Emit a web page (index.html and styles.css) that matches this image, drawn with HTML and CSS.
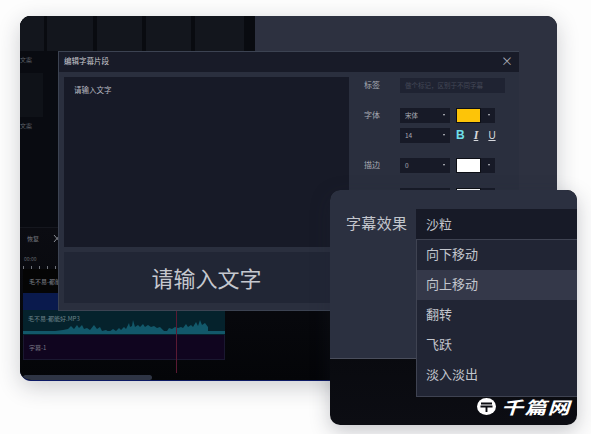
FILE: index.html
```html
<!DOCTYPE html>
<html lang="zh">
<head>
<meta charset="utf-8">
<title>字幕效果</title>
<link rel="stylesheet" href="styles.css">
</head>
<body>
<div class="desk">
  <section class="win">
    <div class="upper">
      <div class="library">
        <div class="thumbs">
          <i class="t1"></i><i class="t2"></i><i class="t3"></i><i class="t4"></i><i class="t5"></i>
        </div>
        <div class="cap">文案</div>
        <div class="card"></div>
        <div class="cap cap2">文案</div>
      </div>
      <div class="viewer"></div>
    </div>
    <div class="timeline">
      <div class="tools">
        <span class="undo">恢复</span>
        <svg class="scissors" width="8" height="9" viewBox="0 0 8 9"><path d="M1 1l6 7M1 8l6-7" stroke="#8b8e96" stroke-width="1" fill="none"/></svg>
      </div>
      <div class="ruler">00:00</div>
      <div class="ticks"></div>
      <div class="tracks">
        <div class="clip video">毛不易-都能好.MP3</div>
        <div class="clip blue"></div>
        <div class="clip audio">
          <svg class="wave" viewBox="0 0 202 24" preserveAspectRatio="none">
            <path fill="#12586a" d="M32 24V21l8-1 5-1 3-3 3 3 3-4 2 3 3-3 2 4 3-1 3 2 4-5 3 4 3-2 2 4 4-1 3 2 4-3 3 2 3-3 2 2 3-3 2 2 3-6 1 4 2-1 1-6 2 7 3-2 2 2 3-3 2 3 3-2 3 2 3-1 3 2 3-1 3 3 2 2 2-1 2-3 3 1 3-2 3 1 3-1 2 1 3-4 2 3 3-2 2 2 3-5 2 4 2-6 2 5 3-2 3 4V24z"/>
            <rect x="0" y="21" width="202" height="3" fill="#12586a"/>
          </svg>
          <span>毛不易-都能好.MP3</span>
        </div>
        <div class="clip subs">字幕-1</div>
        <div class="playhead"></div>
      </div>
      <div class="scrollbar"></div>
    </div>
  </section>

  <section class="dialog">
    <header class="dlg-title"><span>编辑字幕片段</span><b class="close">×</b></header>
    <div class="dlg-body">
      <div class="editor">
        <div class="textarea">请输入文字</div>
        <div class="preview">请输入文字</div>
      </div>
      <div class="props">
        <div class="prop">
          <label>标签</label>
          <div class="input">做个标记，区别于不同字幕</div>
        </div>
        <div class="prop font-row">
          <label>字体</label>
          <div class="ctrl"><div class="sel">宋体<em></em></div><div class="color"><i class="yellow"></i><em></em></div></div>
        </div>
        <div class="prop size-row">
          <label></label>
          <div class="ctrl"><div class="sel">14<em></em></div>
            <div class="styles"><b class="bold">B</b><b class="ital">I</b><b class="under">U</b></div>
          </div>
        </div>
        <div class="prop stroke-row">
          <label>描边</label>
          <div class="ctrl"><div class="sel">0<em></em></div><div class="color"><i class="white"></i><em></em></div></div>
        </div>
        <div class="prop stroke-row">
          <label></label>
          <div class="ctrl"><div class="sel"></div><div class="color"><i class="white"></i><em></em></div></div>
        </div>
      </div>
    </div>
  </section>

  <section class="panel">
    <div class="panel-top">
      <div class="panel-label">字幕效果</div>
      <div class="panel-field">
        <div class="panel-select">沙粒</div>
        <ul class="menu">
          <li>向下移动</li>
          <li class="on">向上移动</li>
          <li>翻转</li>
          <li>飞跃</li>
          <li>淡入淡出</li>
        </ul>
      </div>
    </div>
    <div class="panel-bottom"></div>
    <div class="mark">
      <svg width="19" height="17" viewBox="0 0 19 17"><ellipse cx="9.5" cy="8.5" rx="9.5" ry="8.5" fill="#fff"/><path d="M4 5.5h11M3.5 8.5h12M9.5 8.5v5.5" stroke="#0a0b10" stroke-width="1.9" fill="none"/></svg>
      <span>千篇网</span>
    </div>
  </section>
</div>
</body>
</html>
```

FILE: styles.css
```css
* { box-sizing: border-box; }
html, body { margin: 0; padding: 0; background: #fdfdfd; }
body { font-family: "Noto Sans CJK SC", "Noto Sans", sans-serif; }
.desk { position: relative; width: 591px; height: 434px; overflow: hidden; }

/* Main window */
.win {
  position: absolute; left: 20px; top: 16px; width: 537px; height: 365px;
  border-radius: 11px; overflow: hidden; background: #07080d;
  box-shadow: 0 6px 22px rgba(30, 35, 50, .22);
  border-bottom: 1px solid #0c1a66;
  display: flex; flex-direction: column;
}
.upper { display: flex; height: 211px; flex: none; }
.library { width: 235px; background: #090b11; flex: none; }
.thumbs { display: flex; height: 35px; background: #090b10; }
.thumbs i { display: block; background: #13161d; height: 35px; }
.t1 { width: 24px; margin-right: 3px; }
.t2 { width: 46px; margin-right: 4px; }
.t3 { width: 45px; margin-right: 4px; }
.t4 { width: 45px; margin-right: 4px; }
.t5 { width: 49px; }
.cap { font-size: 6px; line-height: 10px; color: #5f6269; margin-top: 4px; height: 18px; }
.card { width: 23px; height: 44px; background: #0f1218; }
.cap2 { margin-top: 4px; }
.viewer { flex: 1; background: #2d3140; }

.timeline { flex: 1; display: flex; flex-direction: column; background: linear-gradient(#0b0c12, #040508); border-top: 1px solid #15171e; }
.tools { height: 21px; margin-bottom: 1px; display: flex; align-items: center; padding-left: 7px; gap: 14px; font-size: 6px; color: #7a7d84; }
.scissors { flex: none; }
.ruler { height: 14px; padding-left: 4px; font-size: 5px; line-height: 14px; color: #5f6268; margin-top: 2px; }
.ticks { height: 3px; margin-left: 3px; width: 60px; background: repeating-linear-gradient(90deg, #6f7279 0 1px, transparent 1px 8px); }
.tracks { position: relative; margin-left: 3px; width: 202px; height: 104px; display: flex; flex-direction: column; }
.clip { font-size: 6px; color: #7f8188; padding-left: 6px; display: flex; align-items: center; flex: none; }
.video { height: 24px; background: #050505; }
.blue { height: 17px; background: #0a1a4d; }
.audio { position: relative; height: 25px; background: #05222c; color: #6f858b; padding-bottom: 8px; padding-left: 5px; }
.audio span { position: relative; }
.wave { position: absolute; left: 0; top: 0; width: 202px; height: 24px; }
.subs { height: 25px; background: #10051f; border: 1px solid #1a1830; border-top: 0; color: #7a7785; padding-left: 5px; }
.playhead { position: absolute; left: 153px; top: 41px; width: 1px; height: 63px; background: #5a1a33; }
.scrollbar { width: 129px; height: 5px; margin: 2px 0 0 3px; border-radius: 3px; background: #2e3444; }

/* Dialog */
.dialog {
  position: absolute; left: 58px; top: 51px; width: 461px; height: 260px;
  background: #2a2f3e; border: 1px solid #3c4352; border-width: 1px 0 1px 1px;
  display: flex; flex-direction: column;
}
.dlg-title {
  height: 20px; flex: none; background: #181b28; padding: 0 5px 3px; display: flex;
  justify-content: space-between; align-items: center; font-size: 7.5px; color: #c8cad0;
}
.close { font-weight: 400; font-size: 12px; color: #a9acb4; margin-right: 1px; }
.dlg-body { flex: 1; display: flex; min-height: 0; }
.editor { width: 290px; flex: none; padding: 5px 0 7px 5px; display: flex; flex-direction: column; }
.textarea { height: 170px; flex: none; background: #171a27; padding: 7px 10px; font-size: 7.5px; line-height: 11px; color: #b9bbc2; }
.preview {
  flex: 1; margin-top: 5px; background: #212635; display: flex; align-items: center;
  justify-content: center; font-size: 22px; color: #c5c8cf; padding-bottom: 1px;
}
.props { flex: 1; padding: 6px 14px 0 15px; display: flex; flex-direction: column; }
.prop { display: flex; align-items: center; height: 15px; font-size: 8px; color: #a7aab2; }
.prop label { width: 36px; flex: none; padding-bottom: 2px; }
.input { width: 105px; height: 15px; background: #1f2332; color: #444857; font-size: 6.5px; line-height: 14px; padding-left: 5px; white-space: nowrap; }
.font-row { margin-top: 15px; }
.size-row { margin-top: 5px; }
.stroke-row { margin-top: 15px; }
.ctrl { display: flex; gap: 6px; align-items: center; }
.sel { position: relative; width: 50px; height: 15px; background: #171a27; color: #a7aab2; font-size: 6.5px; line-height: 14px; padding-left: 5px; }
.sel em, .color em {
  position: absolute; right: 5px; top: 6px; width: 0; height: 0;
  border-left: 1.5px solid transparent; border-right: 1.5px solid transparent; border-top: 2px solid #c5c7cd;
}
.color { position: relative; width: 39px; height: 15px; background: #171a27; }
.color i { display: block; width: 25px; height: 15px; border: 1px solid #0d0f16; }
.yellow { background: #fdc408; }
.white { background: #fff; }
.styles { display: flex; gap: 8px; font-size: 12px; line-height: 15px; color: #d5d7dc; font-family: "Liberation Sans", sans-serif; }
.styles b { width: 8px; text-align: center; }
.bold { color: #6fe0ec; }
.ital { font-style: italic; text-decoration: underline; text-decoration-thickness: 1px; font-family: "Liberation Serif", serif; }
.under { text-decoration: underline; font-weight: 400; font-size: 10px; }

/* Effect panel */
.panel {
  position: absolute; left: 330px; top: 190px; width: 247px; height: 235px;
  border-radius: 10px; overflow: hidden; background: linear-gradient(#020305, #0c0d13);
  box-shadow: 0 6px 20px rgba(30, 35, 50, .25);
}
.panel-top { position: relative; height: 169px; background: #2b3040; border-bottom: 1px solid #4a4e5c; display: flex; padding: 19px 0 0 16px; }
.panel-label { width: 70px; flex: none; font-size: 15px; line-height: 28px; letter-spacing: .35px; color: #c3c6cd; }
.panel-field { position: absolute; left: 86px; top: 19px; width: 161px; z-index: 1; }
.panel-select { height: 30px; background: #171a27; color: #c3c6cd; font-size: 13px; line-height: 30px; padding-left: 10px; }
.menu { list-style: none; margin: 0; padding: 0 0 6px; background: #212534; border: 1px solid #3f4352; border-right: 0; }
.menu li { height: 30px; line-height: 28px; padding-left: 9px; font-size: 13px; color: #c3c6cd; }
.menu li.on { background: #343849; }
.mark { position: absolute; left: 147px; top: 208px; display: flex; align-items: center; gap: 5px; color: #fff; z-index: 2; }
.mark svg { flex: none; }
.mark span { font-size: 22px; line-height: 17px; font-weight: 700; font-style: italic; letter-spacing: 1.2px; white-space: nowrap; transform: scaleY(.78); }
```
